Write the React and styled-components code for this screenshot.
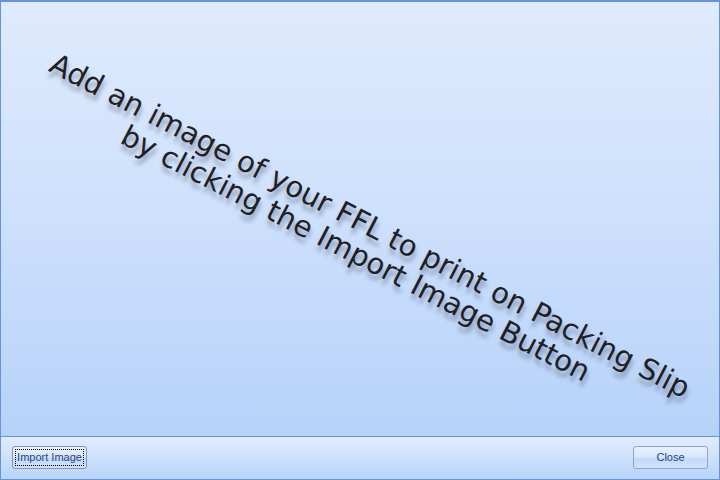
import React from 'react';
import styled, { createGlobalStyle } from 'styled-components';

const GlobalStyle = createGlobalStyle`
  html, body {
    margin: 0;
    padding: 0;
    width: 720px;
    height: 480px;
    overflow: hidden;
  }
`;

const Window = styled.div`
  box-sizing: border-box;
  width: 720px;
  height: 480px;
  display: flex;
  flex-direction: column;
  border: 1px solid #6893d6;
  border-top-width: 2px;
`;

const Canvas = styled.div`
  flex: 1;
  position: relative;
  overflow: hidden;
  display: flex;
  align-items: center;
  justify-content: center;
  background: linear-gradient(to bottom, #dfebfd 0%, #cfe1fc 45%, #b6d2f9 100%);
`;

const Hint = styled.div`
  transform: translate(3px, 21px) rotate(27.3deg);
  text-align: center;
  white-space: nowrap;
  font-family: "DejaVu Sans", Verdana, sans-serif;
  font-size: 29px;
  line-height: 31px;
  color: #1e2024;
  text-shadow: 3px 5px 4px rgba(40, 50, 70, 0.4);
`;

const Footer = styled.div`
  height: 43px;
  box-sizing: border-box;
  border-top: 1px solid #6893d6;
  display: flex;
  align-items: center;
  justify-content: space-between;
  padding: 0 11px 2px 11px;
  background: linear-gradient(to bottom, #e2edfd 0%, #cde0fb 50%, #b8d4fa 100%);
`;

const Button = styled.button`
  width: 75px;
  height: 23px;
  padding: 0;
  box-sizing: border-box;
  border: 1px solid #8ea6c8;
  border-radius: 3px;
  background: linear-gradient(to bottom, #e8f1fd 0%, #d6e6fc 50%, #c2d9f8 51%, #cfe2fb 100%);
  font-family: "Liberation Sans", Arial, sans-serif;
  font-size: 11px;
  color: #1d4488;
  position: relative;
  outline: none;

  ${(p) =>
    p.$focused &&
    `
    border-color: #7d96bd;
    &::after {
      content: '';
      position: absolute;
      inset: 2px;
      border: 1px dotted #000;
    }
  `}
`;

export default function App() {
  return (
    <>
      <GlobalStyle />
      <Window>
        <Canvas>
          <Hint>
            Add an image of your FFL to print on Packing Slip
            <br />
            by clicking the Import Image Button
          </Hint>
        </Canvas>
        <Footer>
          <Button $focused>Import Image</Button>
          <Button>Close</Button>
        </Footer>
      </Window>
    </>
  );
}
